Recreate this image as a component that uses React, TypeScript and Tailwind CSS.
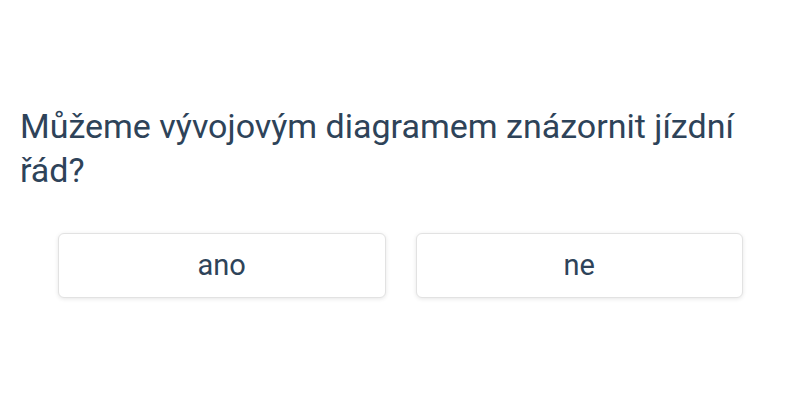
export default function App() {
  return (
    <div className="w-[800px] h-[400px] bg-white text-[#2e4359]" style={{ fontFamily: "Roboto, sans-serif" }}>
      <div className="pt-[104px] px-5">
        <h1 className="text-[34px] leading-[44px] font-normal">Můžeme vývojovým diagramem znázornit jízdní řád?</h1>
      </div>
      <div className="mt-[41px] pl-[58px] pr-[57px] grid grid-cols-2 gap-[30px]">
        <button className="h-[65px] rounded-[6px] border border-[#e2e2e2] bg-white shadow-[0_1px_4px_rgba(0,0,0,0.1)] text-[29px] text-[#2e4359]">ano</button>
        <button className="h-[65px] rounded-[6px] border border-[#e2e2e2] bg-white shadow-[0_1px_4px_rgba(0,0,0,0.1)] text-[29px] text-[#2e4359]">ne</button>
      </div>
    </div>
  );
}
